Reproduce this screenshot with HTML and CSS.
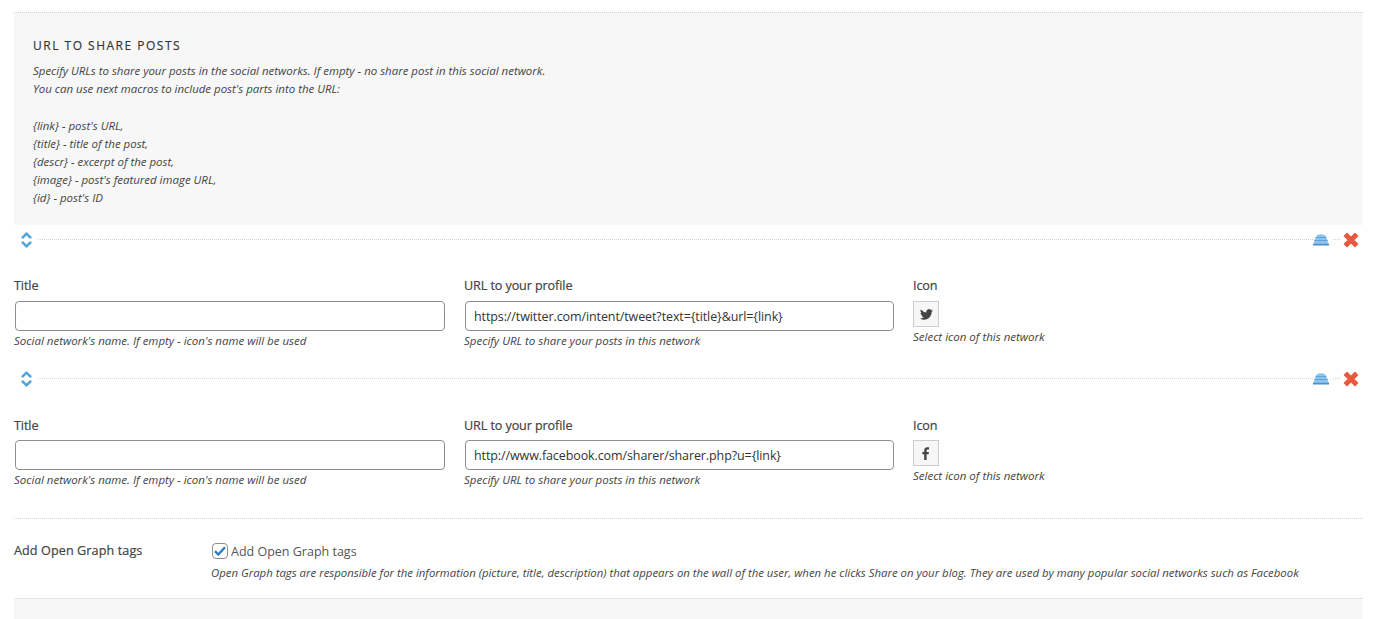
FILE: index.html
```html
<!DOCTYPE html>
<html lang="en">
<head>
<meta charset="utf-8">
<title>URL to share posts</title>
<link rel="stylesheet" href="styles.css">
</head>
<body>
<div class="page">
  <section class="intro">
    <h2>URL to share posts</h2>
    <p>Specify URLs to share your posts in the social networks. If empty - no share post in this social network.<br>You can use next macros to include post's parts into the URL:<br><br>{link} - post's URL,<br>{title} - title of the post,<br>{descr} - excerpt of the post,<br>{image} - post's featured image URL,<br>{id} - post's ID</p>
  </section>

  <div class="repeat first">
    <div class="toolbar">
      <svg class="updown" width="11" height="16" viewBox="0 0 11 16"><path d="M5.500 0 11 5.200 9.100 7 5.500 3.600 1.900 7 0 5.200zM5.500 16 0 10.800 1.900 9 5.500 12.400 9.100 9 11 10.800z" fill="#55a4d6"/></svg>
      <span class="rule"></span>
      <svg class="clone" width="16" height="12" viewBox="0 0 16 12"><path d="M1 9.500C1 6 2.800 1.800 5 .7 6.500 0 9.500 0 11 .7 13.200 1.800 15 6 15 9.500z" fill="#8cc4ee"/><path d="M3 3.500h10M1.500 6.500h13" stroke="#5fa3dc" stroke-width="1" fill="none"/><path d="M0 9.500h16V11.500H0z" fill="#4a8fce"/></svg>
      <span class="rule short"></span>
      <svg class="remove" width="16" height="16" viewBox="0 0 16 16"><path d="M1.500 4 4 1.500 8 5.500 12 1.500 14.500 4 10.500 8 14.500 12 12 14.500 8 10.500 4 14.500 1.500 12 5.500 8z" fill="#e8583f" stroke="#e8583f" stroke-width="1.500" stroke-linejoin="round"/></svg>
    </div>
    <div class="fields">
      <div class="field wide">
        <label>Title</label>
        <input class="text" type="text">
        <em>Social network's name. If empty - icon's name will be used</em>
      </div>
      <div class="field wide">
        <label>URL to your profile</label>
        <input class="text" type="text" value="https://twitter.com/intent/tweet?text={title}&amp;url={link}">
        <em>Specify URL to share your posts in this network</em>
      </div>
      <div class="field">
        <label>Icon</label>
        <span class="iconbox"><svg width="13" height="11" viewBox="0 0 24 20"><path d="M24 2.400a9.800 9.800 0 0 1-2.800.8A4.900 4.900 0 0 0 23.300.5a9.800 9.800 0 0 1-3.100 1.200 4.900 4.900 0 0 0-8.400 4.500A14 14 0 0 1 1.700.9a4.900 4.900 0 0 0 1.500 6.600 4.900 4.900 0 0 1-2.200-.6 4.900 4.900 0 0 0 3.900 4.900 4.900 4.900 0 0 1-2.200.1 4.900 4.900 0 0 0 4.600 3.400A9.900 9.900 0 0 1 0 17.300 14 14 0 0 0 7.500 19.500c9.100 0 14.300-7.700 14-14.600A10 10 0 0 0 24 2.400z" fill="#444"/></svg></span>
        <em>Select icon of this network</em>
      </div>
    </div>
  </div>

  <div class="repeat second">
    <div class="toolbar">
      <svg class="updown" width="11" height="16" viewBox="0 0 11 16"><path d="M5.500 0 11 5.200 9.100 7 5.500 3.600 1.900 7 0 5.200zM5.500 16 0 10.800 1.900 9 5.500 12.400 9.100 9 11 10.800z" fill="#55a4d6"/></svg>
      <span class="rule"></span>
      <svg class="clone" width="16" height="12" viewBox="0 0 16 12"><path d="M1 9.500C1 6 2.800 1.800 5 .7 6.500 0 9.500 0 11 .7 13.200 1.800 15 6 15 9.500z" fill="#8cc4ee"/><path d="M3 3.500h10M1.500 6.500h13" stroke="#5fa3dc" stroke-width="1" fill="none"/><path d="M0 9.500h16V11.500H0z" fill="#4a8fce"/></svg>
      <span class="rule short"></span>
      <svg class="remove" width="16" height="16" viewBox="0 0 16 16"><path d="M1.500 4 4 1.500 8 5.500 12 1.500 14.500 4 10.500 8 14.500 12 12 14.500 8 10.500 4 14.500 1.500 12 5.500 8z" fill="#e8583f" stroke="#e8583f" stroke-width="1.500" stroke-linejoin="round"/></svg>
    </div>
    <div class="fields">
      <div class="field wide">
        <label>Title</label>
        <input class="text" type="text">
        <em>Social network's name. If empty - icon's name will be used</em>
      </div>
      <div class="field wide">
        <label>URL to your profile</label>
        <input class="text" type="text" value="http://www.facebook.com/sharer/sharer.php?u={link}">
        <em>Specify URL to share your posts in this network</em>
      </div>
      <div class="field">
        <label>Icon</label>
        <span class="iconbox"><svg width="8" height="13" viewBox="0 0 8 13"><path d="M2.200 13V7.200H.3V5h1.900V3.300C2.200 1.300 3.400.2 5.200.2c.9 0 1.600.1 1.800.1v2.100H5.800c-1 0-1.200.5-1.200 1.100V5h2.300l-.3 2.200H4.600V13z" fill="#444"/></svg></span>
        <em>Select icon of this network</em>
      </div>
    </div>
  </div>

  <div class="option">
    <div class="option-label">Add Open Graph tags</div>
    <div class="option-body">
      <label class="check"><span class="box"><svg width="12" height="10" viewBox="0 0 12 10"><path d="M1 5.200 4.300 8.500 11 1.200" fill="none" stroke="#2f7cc4" stroke-width="2.400"/></svg></span>Add Open Graph tags</label>
      <em>Open Graph tags are responsible for the information (picture, title, description) that appears on the wall of the user, when he clicks Share on your blog. They are used by many popular social networks such as Facebook</em>
    </div>
  </div>
  <div class="next"></div>
</div>
</body>
</html>
```
FILE: styles.css
```css
* { box-sizing: border-box; }
html, body { margin: 0; height: 619px; overflow: hidden; background: #fff; }
body { font-family: "Open Sans", sans-serif; color: #444; }
.page { padding: 12px 18px 0 14px; }
em { display: block; font-size: 11.5px; line-height: 18px; font-style: italic; color: #444; }

.intro { height: 213px; border-top: 1px dotted #d4d4d4; background: #f7f7f7; padding: 24px 19px 0; }
.intro h2 { margin: 0; font-size: 12px; line-height: 17px; font-weight: 400; letter-spacing: 1.5px; text-transform: uppercase; color: #333; -webkit-text-stroke: .15px #333; }
.intro p { margin: 8px 0 0; font-size: 11.46px; line-height: 18.2px; font-style: italic; }

.toolbar { display: flex; align-items: center; height: 16px; padding: 0 4px 0 7px; }
.toolbar svg { margin-top: 2px; }
.rule { flex: 1; border-top: 1px dotted #d4d4d4; margin-left: 6px; }
.rule.short { flex: 0 0 7px; margin-left: 4px; margin-right: 3px; }
.repeat.first { padding-top: 6px; height: 139px; }
.repeat.second { padding-top: 6px; height: 154px; }

.fields { display: grid; grid-template-columns: 431px 430px 1fr; column-gap: 19px; margin-top: 30px; }
.second .fields { margin-top: 31px; }
.field label { display: block; font-size: 12.6px; line-height: 18px; letter-spacing: -.1px; color: #444; -webkit-text-stroke: .2px #444; margin-bottom: 6px; }
.second .field label { margin-bottom: 5px; }
.field em { margin-top: 1px; }
.text { display: block; width: 430px; height: 30px; margin-left: 1px; padding: 0 8px; border: 1px solid #8c8f94; border-radius: 4px; background: #fff; font: 12.5px "Open Sans", sans-serif; letter-spacing: -.1px; color: #333; }
.field:nth-child(2) .text { width: 429px; }
.iconbox { display: flex; align-items: center; justify-content: center; width: 26px; height: 26px; border: 1px solid #ccc; background: #f7f7f7; }

.option { display: grid; grid-template-columns: 197px 1fr; height: 80px; border-top: 1px dotted #d4d4d4; padding-top: 22px; }
.option-label { margin-top: 1px; font-size: 12.6px; line-height: 18px; letter-spacing: .1px; -webkit-text-stroke: .2px #444; }
.check { display: flex; align-items: center; height: 18px; font-size: 12.5px; color: #555; margin-top: 1px; }
.box { display: flex; align-items: center; justify-content: center; width: 16px; height: 16px; margin: 0 3px 0 1px; border: 1px solid #8c8f94; border-radius: 4px; background: #fff; }
.option-body em { margin-top: 4px; font-size: 11.38px; }
.next { height: 21px; border-top: 1px dotted #d4d4d4; background: #f7f7f7; }
```
